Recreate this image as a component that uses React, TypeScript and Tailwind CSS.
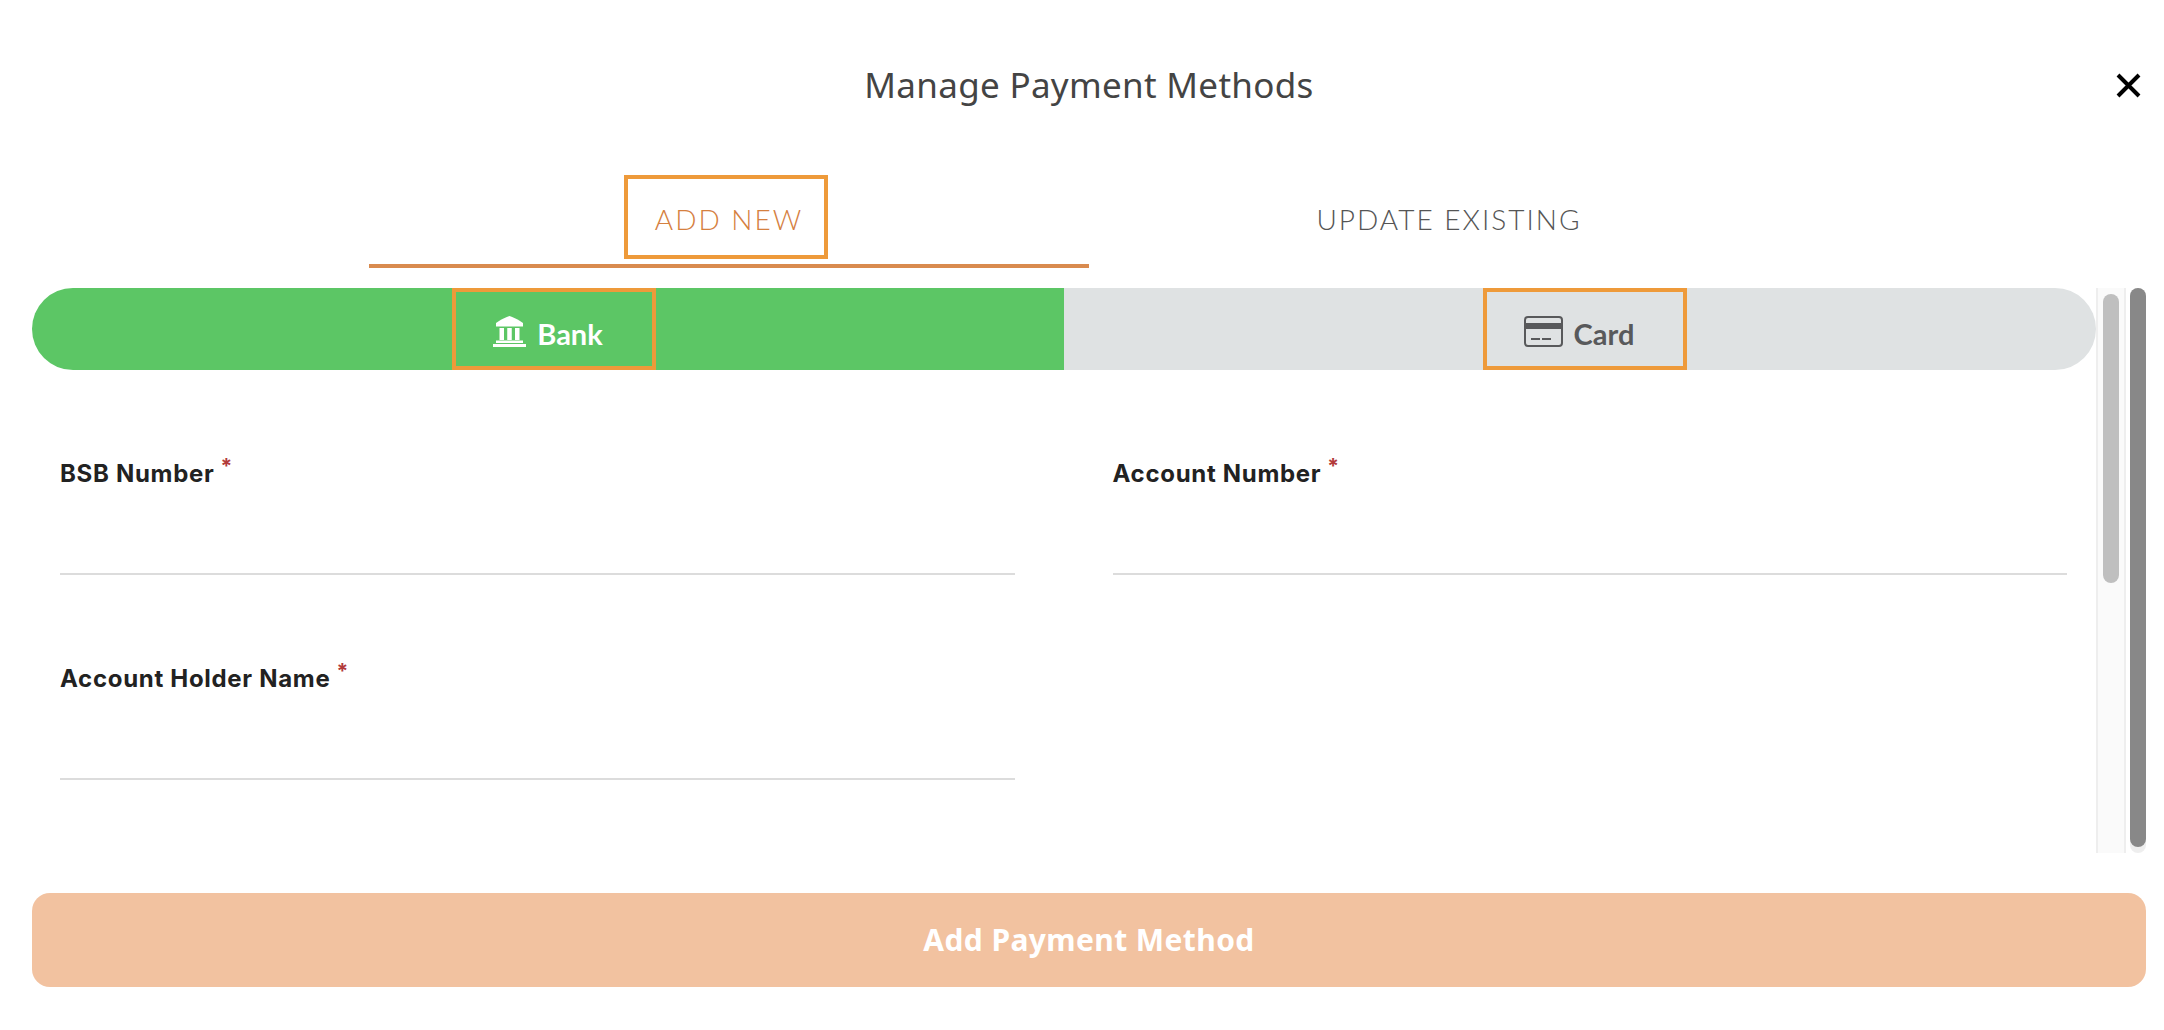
import React from "react";

function BankIcon() {
  return (
    <svg width="33" height="31" viewBox="0 0 33 31" fill="#fff" className="shrink-0 -mt-[6px]">
      <path d="M16.5 0 C20 1 24 3 27 5 L30 7 L30 10.5 L3 10.5 L3 7 L6 5 C9 3 13 1 16.5 0 Z" />
      <rect x="6.5" y="12" width="4.5" height="12" />
      <rect x="14.25" y="12" width="4.5" height="12" />
      <rect x="22" y="12" width="4.5" height="12" />
      <rect x="3" y="24.5" width="27" height="2.5" />
      <rect x="0" y="28" width="33" height="3" />
    </svg>
  );
}

function CardIcon() {
  return (
    <svg width="39" height="31" viewBox="0 0 39 31" fill="none" className="shrink-0 -mt-[6px]">
      <rect x="1" y="1" width="37" height="29" rx="3" stroke="#58595b" strokeWidth="2" />
      <rect x="1" y="7" width="37" height="6" fill="#58595b" />
      <rect x="7" y="22" width="9" height="2" fill="#58595b" />
      <rect x="18" y="22" width="9" height="2" fill="#58595b" />
    </svg>
  );
}

function Field({ label, className = "" }: { label: string; className?: string }) {
  return (
    <div className={`flex flex-col ${className}`}>
      <div className="flex items-start h-[32px] pt-[2px]">
        <span className="font-['Inter',sans-serif] text-[24px] leading-[32px] font-bold tracking-[0.7px] text-[#222222]">
          {label}
        </span>
        <span className="ml-[6px] -mt-[2px] text-[21px] leading-[22px] font-bold text-[#b23a3a] font-['Inter',sans-serif]">*</span>
      </div>
      <div className="h-[87px] border-b-2 border-[#dcdcdc]" />
    </div>
  );
}

export default function App() {
  return (
    <div className="w-[2164px] h-[1030px] flex flex-col bg-white overflow-hidden font-['Lato',sans-serif]">
      <header className="relative h-[175px] shrink-0 flex justify-center pt-[61px] pl-[14px]">
        <h1 className="font-['Noto_Sans',sans-serif] text-[35px] leading-[48px] font-normal tracking-[0.3px] text-[#444444]">
          Manage Payment Methods
        </h1>
        <svg className="absolute left-[2116px] top-[73px]" width="25" height="25" viewBox="0 0 25 25" stroke="#000" strokeWidth="4" fill="none">
          <path d="M2 2 L23 23 M23 2 L2 23" />
        </svg>
      </header>

      <div className="ml-[369px] w-[1440px] flex shrink-0 h-[93px]">
        <div className="w-[720px] border-b-4 border-[#d98b4f] pb-[5px] flex justify-center">
          <div className="mr-[6px] w-[204px] h-[84px] border-4 border-[#ee9a3a] flex items-center justify-center pt-[3px] pl-[6px]">
            <span className="text-[28px] font-light tracking-[2px] text-[#d5803f]">ADD NEW</span>
          </div>
        </div>
        <div className="w-[720px] pb-[5px] flex items-center justify-center">
          <span className="text-[28px] font-light tracking-[2px] text-[#555555]">UPDATE EXISTING</span>
        </div>
      </div>

      <div className="flex mt-[20px] pl-[32px] pr-[18px] h-[565px] shrink-0">
        <main className="w-[2064px] flex flex-col">
          <div className="flex h-[82px] shrink-0">
            <div className="w-[1032px] bg-[#5cc665] rounded-l-[41px] flex justify-center">
              <div className="ml-[12px] w-[204px] border-4 border-[#ee9a3a] flex items-center justify-center gap-[11px] pt-[10px] pr-[12px]">
                <BankIcon />
                <span className="text-[29px] font-bold text-white">Bank</span>
              </div>
            </div>
            <div className="w-[1032px] bg-[#dfe2e3] rounded-r-[41px] flex justify-center">
              <div className="ml-[10px] w-[204px] border-4 border-[#ee9a3a] flex items-center justify-center gap-[11px] pt-[10px] pr-[12px]">
                <CardIcon />
                <span className="text-[29px] font-bold text-[#58595b]">Card</span>
              </div>
            </div>
          </div>
          <div className="grid grid-cols-2 gap-x-[98px] gap-y-[86px] pl-[28px] pr-[29px] pt-[86px]">
            <Field label="BSB Number" />
            <Field label="Account Number" />
            <Field label="Account Holder Name" />
          </div>
        </main>
        <div className="w-[30px] bg-[#fafafa] border-x-2 border-[#eeeeee] pt-[6px] flex justify-center">
          <div className="w-[16px] h-[289px] rounded-[8px] bg-[#bfbfbf]" />
        </div>
        <div className="ml-[4px] w-[16px] rounded-[8px] bg-[#eeeeee]">
          <div className="h-[559px] rounded-[8px] bg-[#888888]" />
        </div>
      </div>

      <button className="mt-[40px] ml-[32px] w-[2114px] h-[94px] shrink-0 rounded-[18px] bg-[#f2c2a0] text-white font-['Noto_Sans',sans-serif] text-[30px] font-bold tracking-[0.4px] pb-[2px]">
        Add Payment Method
      </button>
    </div>
  );
}
